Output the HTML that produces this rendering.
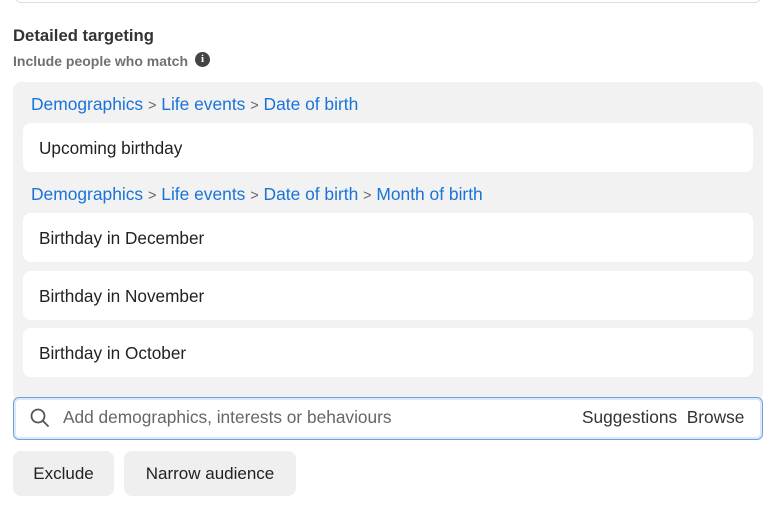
<!DOCTYPE html>
<html><head><style>
*{box-sizing:border-box;margin:0;padding:0}
body{width:772px;height:510px;background:#fff;font-family:"Liberation Sans",Arial,sans-serif;position:relative;overflow:hidden;color:#1c1e21}
.a{position:absolute}
.top{left:15px;top:-10px;width:746px;height:13px;border:1px solid #ddd;border-radius:6px}
.h{left:13px;top:26px;font-size:16.7px;font-weight:bold;color:#333}
.s{left:13px;top:53px;font-size:14px;font-weight:bold;color:#707070}
.info{left:195px;top:52px;width:15px;height:15px;border-radius:50%;background:#444;color:#fff;font-size:11px;font-weight:bold;text-align:center;line-height:15px;font-family:"Liberation Serif",serif}
.panel{left:13px;top:82px;width:750px;height:320px;background:#f2f2f2;border-radius:8px}
.bc{left:31px;font-size:17.4px;color:#1a73d9}
.bc span{color:#666;font-size:14.5px}
.row{left:23px;width:730px;height:49px;background:#fff;border-radius:8px;font-size:17.2px;padding-left:16px;line-height:51px;color:#222}
.search{left:13px;top:397px;width:750px;height:43px;background:#fff;border:1px solid #6fa3e0;border-radius:6px;box-shadow:0 0 0 2px #dbe8fa inset}
.ph{left:63px;top:407px;font-size:17.3px;color:#666}
.sg{left:582px;top:407px;font-size:17.3px;color:#333}
.btn{top:451px;height:45px;background:#efefef;border-radius:8px;font-size:17px;line-height:46px;text-align:center;color:#222}
</style></head><body>
<div class="a top"></div>
<div class="a h">Detailed targeting</div>
<div class="a s">Include people who match</div>
<div class="a info">i</div>
<div class="a panel"></div>
<div class="a bc" style="top:94px">Demographics <span>&gt;</span> Life events <span>&gt;</span> Date of birth</div>
<div class="a row" style="top:123px">Upcoming birthday</div>
<div class="a bc" style="top:184px">Demographics <span>&gt;</span> Life events <span>&gt;</span> Date of birth <span>&gt;</span> Month of birth</div>
<div class="a row" style="top:213px">Birthday in December</div>
<div class="a row" style="top:271px">Birthday in November</div>
<div class="a row" style="top:328px">Birthday in October</div>
<div class="a search"></div>
<svg class="a" style="left:29px;top:407px" width="22" height="22" viewBox="0 0 22 22"><circle cx="9" cy="9" r="6.5" fill="none" stroke="#555" stroke-width="1.8"/><path d="M13.8 13.8L19 19" stroke="#555" stroke-width="1.8" stroke-linecap="round"/></svg>
<div class="a ph">Add demographics, interests or behaviours</div>
<div class="a sg">Suggestions&nbsp; Browse</div>
<div class="a btn" style="left:13px;width:101px">Exclude</div>
<div class="a btn" style="left:124px;width:172px">Narrow audience</div>
</body></html>
